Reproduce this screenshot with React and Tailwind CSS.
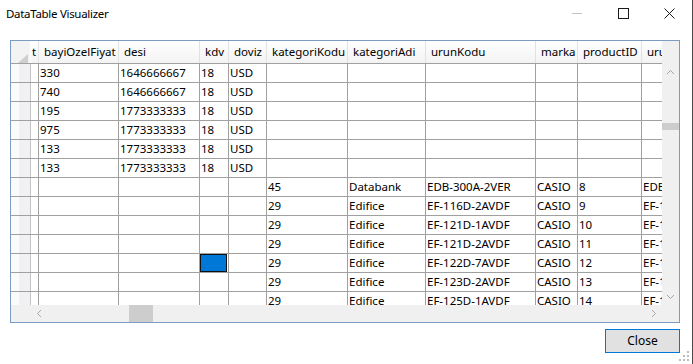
const FONT = { fontFamily: "'Noto Sans', 'Open Sans', sans-serif" };

const columns = [
  { key: "t", label: "t", w: "w-[8px]" },
  { key: "bayi", label: "bayiOzelFiyat", w: "w-[80px]" },
  { key: "desi", label: "desi", w: "w-[81px]" },
  { key: "kdv", label: "kdv", w: "w-[29px]" },
  { key: "doviz", label: "doviz", w: "w-[38px]" },
  { key: "katKod", label: "kategoriKodu", w: "w-[81px]" },
  { key: "katAdi", label: "kategoriAdi", w: "w-[78px]" },
  { key: "urun", label: "urunKodu", w: "w-[110px]" },
  { key: "marka", label: "marka", w: "w-[42px]" },
  { key: "pid", label: "productID", w: "w-[64px]" },
  { key: "uru", label: "urunAdi", w: "w-[100px]" },
];

const top = [
  ["330", "1646666667"],
  ["740", "1646666667"],
  ["195", "1773333333"],
  ["975", "1773333333"],
  ["133", "1773333333"],
  ["133", "1773333333"],
];

const bottom = [
  ["45", "Databank", "EDB-300A-2VER", "8"],
  ["29", "Edifice", "EF-116D-2AVDF", "9"],
  ["29", "Edifice", "EF-121D-1AVDF", "10"],
  ["29", "Edifice", "EF-121D-2AVDF", "11"],
  ["29", "Edifice", "EF-122D-7AVDF", "12"],
  ["29", "Edifice", "EF-123D-2AVDF", "13"],
  ["29", "Edifice", "EF-125D-1AVDF", "14"],
];

const rows = [
  ...top.map(([b, d]) => ({ bayi: b, desi: d, kdv: "18", doviz: "USD" })),
  ...bottom.map(([k, a, u, p]) => ({
    katKod: k,
    katAdi: a,
    urun: u,
    marka: "CASIO",
    pid: p,
    uru: u,
  })),
];

const Chevron = ({ rot }) => (
  <svg width="9" height="9" viewBox="0 0 9 9" className={rot}>
    <path d="M1 6 L4.5 2.5 L8 6" fill="none" stroke="#a6a6a6" strokeWidth="1" />
  </svg>
);

const RowHeader = () => (
  <div className="flex w-[20px] h-full shrink-0 border-r border-[#c4c4c4]">
    <div className="w-[8px] bg-[#fbfbfb]" />
    <div className="flex-1 bg-[#f1f1f3]" />
  </div>
);

export default function App() {
  return (
    <div
      className="relative w-[693px] h-[364px] bg-white border-r border-[#4a4a4a] text-black overflow-hidden"
      style={FONT}
    >
      {/* title bar */}
      <div className="flex items-center h-[27px] pl-[6px] text-[11.5px]">
        <span className="tracking-[-0.3px]">DataTable Visualizer</span>
        <div className="ml-auto flex items-center h-full">
          <div className="w-[46px] flex justify-center">
            <div className="w-[10px] h-px bg-[#c4c4c4]" />
          </div>
          <div className="w-[46px] flex justify-center">
            <div className="w-[11px] h-[11px] border border-[#1a1a1a]" />
          </div>
          <div className="w-[46px] flex justify-center">
            <svg width="11" height="11" viewBox="0 0 11 11">
              <path d="M0.5 0.5 L10.5 10.5 M10.5 0.5 L0.5 10.5" stroke="#1a1a1a" strokeWidth="1" />
            </svg>
          </div>
        </div>
      </div>

      {/* grid panel */}
      <div className="ml-[10px] mt-[13px] w-[670px] h-[283px] border border-[#7b9cc3] flex flex-col">
        <div className="flex h-[264px]">
          {/* table */}
          <div className="w-[651px] h-full overflow-hidden text-[11.5px] leading-none">
            {/* header */}
            <div className="flex h-[23px] border-b border-[#a0a0a0] bg-gradient-to-b from-white to-[#f3f3f3]">
              <div className="relative w-[20px] shrink-0 bg-[#f3f3f3] border-r border-[#fdfdfd]">
                <svg width="10" height="9" viewBox="0 0 10 9" className="absolute left-[7px] top-[13px]">
                  <path d="M10 0 L10 9 L0 9 Z" fill="#cfcfcf" />
                </svg>
              </div>
              {columns.map((c) => (
                <div
                  key={c.key}
                  className={`${c.w} shrink-0 flex items-center overflow-hidden whitespace-nowrap border-r border-[#e2e2e2] ${
                    c.key === "t" ? "pl-[1px]" : "pl-[5px]"
                  }`}
                >
                  {c.label}
                </div>
              ))}
            </div>
            {/* rows */}
            {rows.map((r, i) => (
              <div key={i} className="flex h-[19px] border-b border-[#a0a0a0]">
                <RowHeader />
                {columns.map((c) => {
                  const sel = i === 10 && c.key === "kdv";
                  return (
                    <div
                      key={c.key}
                      className={`${c.w} shrink-0 flex items-center overflow-hidden whitespace-nowrap pl-[1px] border-r border-[#a0a0a0]`}
                    >
                      {sel ? (
                        <div className="w-full h-[18px] -ml-[1px] bg-[#0078d7] border border-[#111]" />
                      ) : (
                        r[c.key] || ""
                      )}
                    </div>
                  );
                })}
              </div>
            ))}
          </div>
          {/* vertical scrollbar */}
          <div className="w-[17px] h-full bg-[#f0f0f0] flex flex-col">
            <div className="h-[23px]" />
            <div className="h-[17px] flex items-center justify-center">
              <Chevron rot="" />
            </div>
            <div className="h-[42px]" />
            <div className="h-[7px] bg-[#cdcdcd]" />
            <div className="flex-1" />
            <div className="h-[17px] flex items-center justify-center">
              <Chevron rot="rotate-180" />
            </div>
          </div>
        </div>
        {/* horizontal scrollbar */}
        <div className="flex h-[17px] bg-[#f0f0f0]">
          <div className="w-[20px]" />
          <div className="w-[17px] flex items-center justify-center">
            <Chevron rot="-rotate-90" />
          </div>
          <div className="w-[81px]" />
          <div className="w-[24px] bg-[#cdcdcd]" />
          <div className="flex-1" />
          <div className="w-[17px] flex items-center justify-center">
            <Chevron rot="rotate-90" />
          </div>
          <div className="w-[17px]" />
        </div>
      </div>

      {/* footer */}
      <div className="flex justify-end pr-[12px] mt-[6px]">
        <button className="w-[75px] h-[24px] bg-[#e1e1e1] border border-[#0078d7] text-[12px] flex items-center justify-center">
          Close
        </button>
      </div>

      {/* resize grip */}
      <svg width="12" height="12" viewBox="0 0 12 12" className="absolute right-[2px] bottom-[2px]">
        {[
          [10, 2], [10, 6], [6, 6], [10, 10], [6, 10], [2, 10],
        ].map(([x, y]) => (
          <rect key={`${x}-${y}`} x={x - 1} y={y - 1} width="2" height="2" fill="#bcbcbc" />
        ))}
      </svg>
    </div>
  );
}
